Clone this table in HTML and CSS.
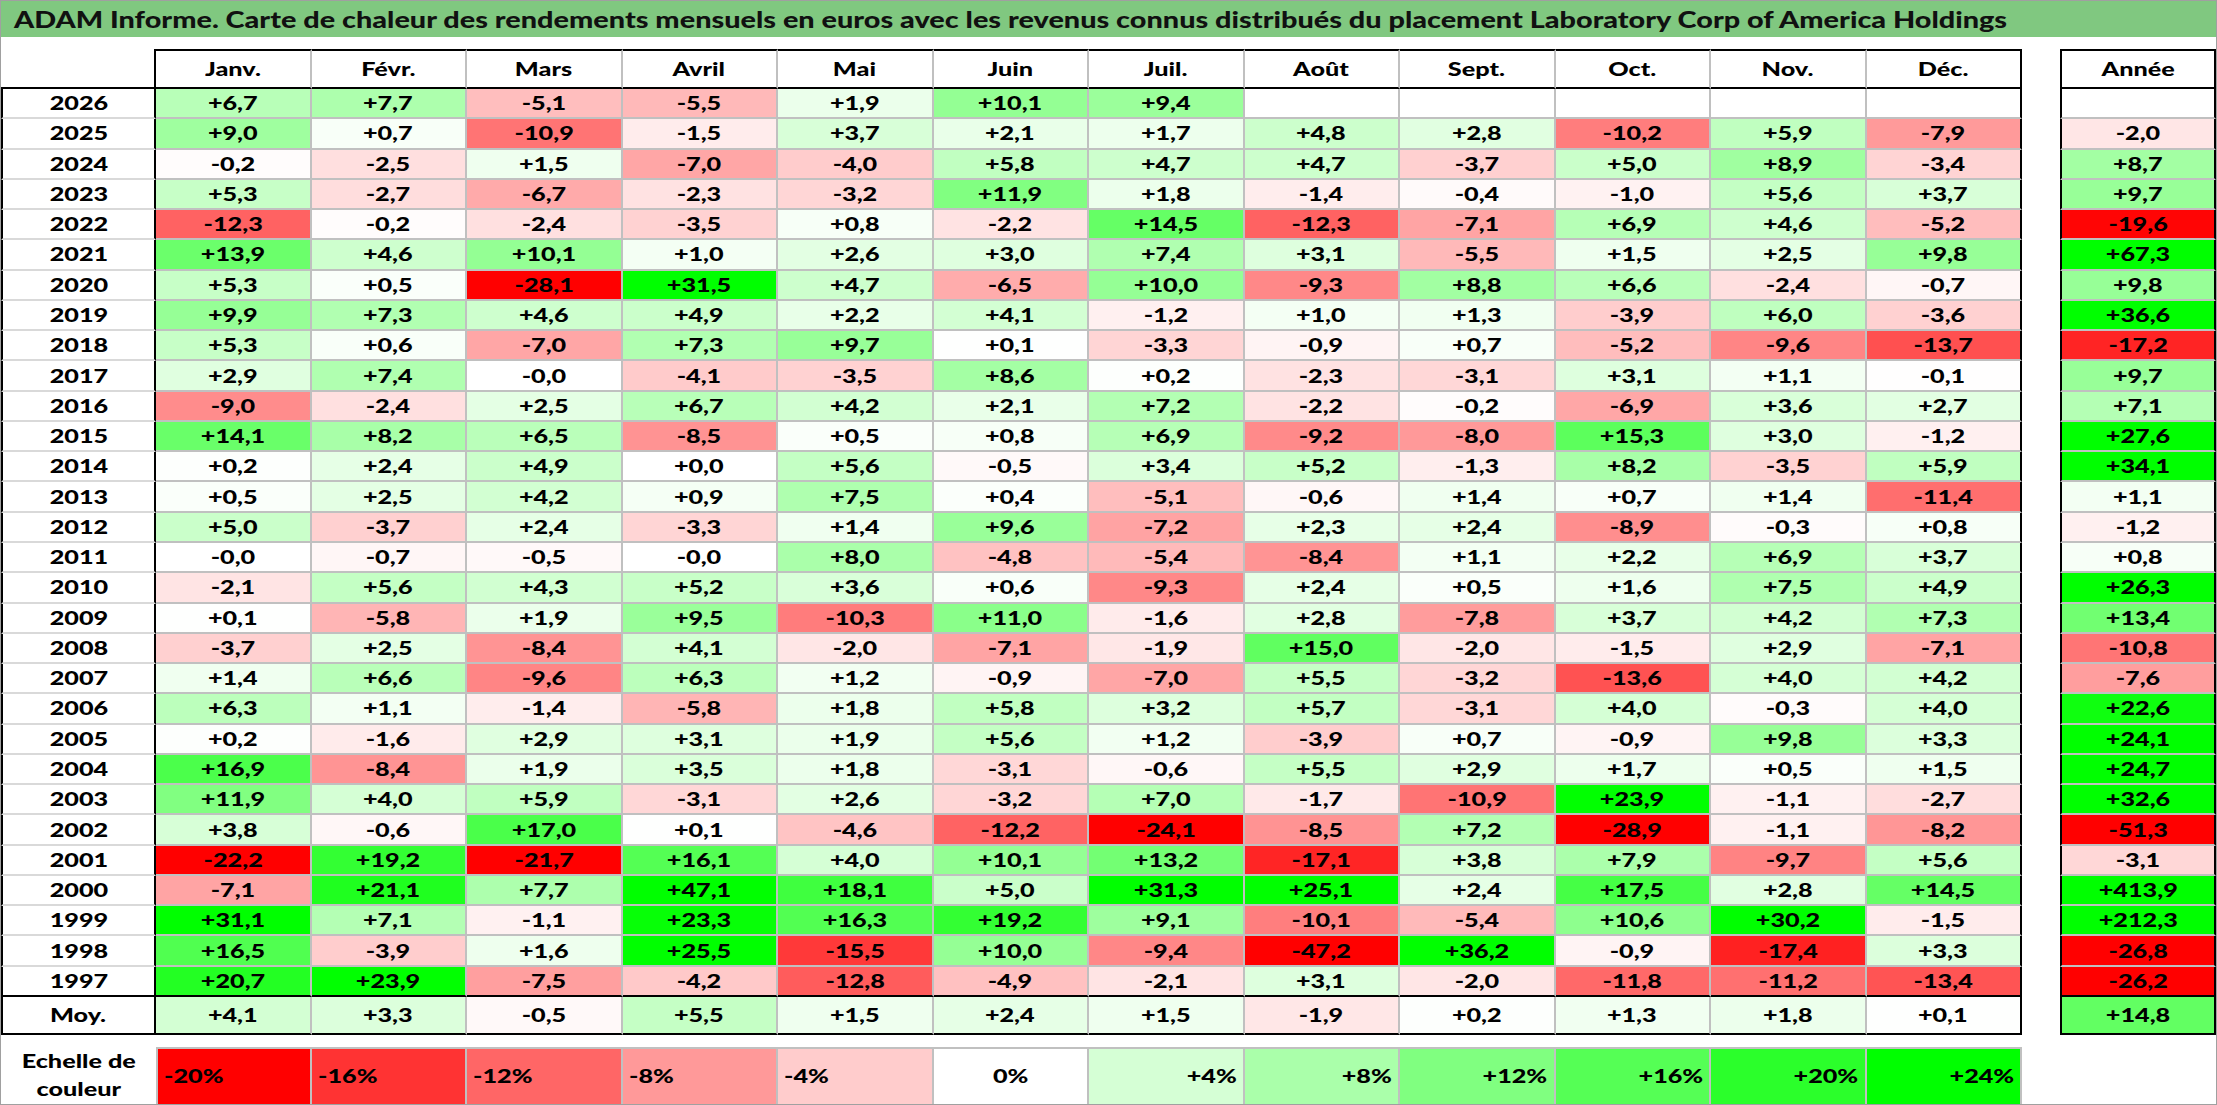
FILE: index.html
```html
<!DOCTYPE html>
<html lang="fr">
<head>
<meta charset="utf-8">
<title>ADAM Informe</title>
<link rel="stylesheet" href="styles.css">
</head>
<body>
<div class="sheet">
<div class="title"><span>ADAM Informe. Carte de chaleur des rendements mensuels en euros avec les revenus connus distribués du placement Laboratory Corp of America Holdings</span></div>
<div class="grid">
<div class="row head"><div></div><div><span>Janv.</span></div><div><span>Févr.</span></div><div><span>Mars</span></div><div><span>Avril</span></div><div><span>Mai</span></div><div><span>Juin</span></div><div><span>Juil.</span></div><div><span>Août</span></div><div><span>Sept.</span></div><div><span>Oct.</span></div><div><span>Nov.</span></div><div><span>Déc.</span></div><div><span>Année</span></div></div>
<div class="row"><div><span>2026</span></div><div class="c" style="--v:6.7"><span>+6,7</span></div><div class="c" style="--v:7.7"><span>+7,7</span></div><div class="c" style="--v:-5.1"><span>-5,1</span></div><div class="c" style="--v:-5.5"><span>-5,5</span></div><div class="c" style="--v:1.9"><span>+1,9</span></div><div class="c" style="--v:10.1"><span>+10,1</span></div><div class="c" style="--v:9.4"><span>+9,4</span></div><div class="e"></div><div class="e"></div><div class="e"></div><div class="e"></div><div class="e"></div><div class="e"></div></div>
<div class="row"><div><span>2025</span></div><div class="c" style="--v:9.0"><span>+9,0</span></div><div class="c" style="--v:0.7"><span>+0,7</span></div><div class="c" style="--v:-10.9"><span>-10,9</span></div><div class="c" style="--v:-1.5"><span>-1,5</span></div><div class="c" style="--v:3.7"><span>+3,7</span></div><div class="c" style="--v:2.1"><span>+2,1</span></div><div class="c" style="--v:1.7"><span>+1,7</span></div><div class="c" style="--v:4.8"><span>+4,8</span></div><div class="c" style="--v:2.8"><span>+2,8</span></div><div class="c" style="--v:-10.2"><span>-10,2</span></div><div class="c" style="--v:5.9"><span>+5,9</span></div><div class="c" style="--v:-7.9"><span>-7,9</span></div><div class="c" style="--v:-2.0"><span>-2,0</span></div></div>
<div class="row"><div><span>2024</span></div><div class="c" style="--v:-0.2"><span>-0,2</span></div><div class="c" style="--v:-2.5"><span>-2,5</span></div><div class="c" style="--v:1.5"><span>+1,5</span></div><div class="c" style="--v:-7.0"><span>-7,0</span></div><div class="c" style="--v:-4.0"><span>-4,0</span></div><div class="c" style="--v:5.8"><span>+5,8</span></div><div class="c" style="--v:4.7"><span>+4,7</span></div><div class="c" style="--v:4.7"><span>+4,7</span></div><div class="c" style="--v:-3.7"><span>-3,7</span></div><div class="c" style="--v:5.0"><span>+5,0</span></div><div class="c" style="--v:8.9"><span>+8,9</span></div><div class="c" style="--v:-3.4"><span>-3,4</span></div><div class="c" style="--v:8.7"><span>+8,7</span></div></div>
<div class="row"><div><span>2023</span></div><div class="c" style="--v:5.3"><span>+5,3</span></div><div class="c" style="--v:-2.7"><span>-2,7</span></div><div class="c" style="--v:-6.7"><span>-6,7</span></div><div class="c" style="--v:-2.3"><span>-2,3</span></div><div class="c" style="--v:-3.2"><span>-3,2</span></div><div class="c" style="--v:11.9"><span>+11,9</span></div><div class="c" style="--v:1.8"><span>+1,8</span></div><div class="c" style="--v:-1.4"><span>-1,4</span></div><div class="c" style="--v:-0.4"><span>-0,4</span></div><div class="c" style="--v:-1.0"><span>-1,0</span></div><div class="c" style="--v:5.6"><span>+5,6</span></div><div class="c" style="--v:3.7"><span>+3,7</span></div><div class="c" style="--v:9.7"><span>+9,7</span></div></div>
<div class="row"><div><span>2022</span></div><div class="c" style="--v:-12.3"><span>-12,3</span></div><div class="c" style="--v:-0.2"><span>-0,2</span></div><div class="c" style="--v:-2.4"><span>-2,4</span></div><div class="c" style="--v:-3.5"><span>-3,5</span></div><div class="c" style="--v:0.8"><span>+0,8</span></div><div class="c" style="--v:-2.2"><span>-2,2</span></div><div class="c" style="--v:14.5"><span>+14,5</span></div><div class="c" style="--v:-12.3"><span>-12,3</span></div><div class="c" style="--v:-7.1"><span>-7,1</span></div><div class="c" style="--v:6.9"><span>+6,9</span></div><div class="c" style="--v:4.6"><span>+4,6</span></div><div class="c" style="--v:-5.2"><span>-5,2</span></div><div class="c" style="--v:-19.6"><span>-19,6</span></div></div>
<div class="row"><div><span>2021</span></div><div class="c" style="--v:13.9"><span>+13,9</span></div><div class="c" style="--v:4.6"><span>+4,6</span></div><div class="c" style="--v:10.1"><span>+10,1</span></div><div class="c" style="--v:1.0"><span>+1,0</span></div><div class="c" style="--v:2.6"><span>+2,6</span></div><div class="c" style="--v:3.0"><span>+3,0</span></div><div class="c" style="--v:7.4"><span>+7,4</span></div><div class="c" style="--v:3.1"><span>+3,1</span></div><div class="c" style="--v:-5.5"><span>-5,5</span></div><div class="c" style="--v:1.5"><span>+1,5</span></div><div class="c" style="--v:2.5"><span>+2,5</span></div><div class="c" style="--v:9.8"><span>+9,8</span></div><div class="c" style="--v:67.3"><span>+67,3</span></div></div>
<div class="row"><div><span>2020</span></div><div class="c" style="--v:5.3"><span>+5,3</span></div><div class="c" style="--v:0.5"><span>+0,5</span></div><div class="c" style="--v:-28.1"><span>-28,1</span></div><div class="c" style="--v:31.5"><span>+31,5</span></div><div class="c" style="--v:4.7"><span>+4,7</span></div><div class="c" style="--v:-6.5"><span>-6,5</span></div><div class="c" style="--v:10.0"><span>+10,0</span></div><div class="c" style="--v:-9.3"><span>-9,3</span></div><div class="c" style="--v:8.8"><span>+8,8</span></div><div class="c" style="--v:6.6"><span>+6,6</span></div><div class="c" style="--v:-2.4"><span>-2,4</span></div><div class="c" style="--v:-0.7"><span>-0,7</span></div><div class="c" style="--v:9.8"><span>+9,8</span></div></div>
<div class="row"><div><span>2019</span></div><div class="c" style="--v:9.9"><span>+9,9</span></div><div class="c" style="--v:7.3"><span>+7,3</span></div><div class="c" style="--v:4.6"><span>+4,6</span></div><div class="c" style="--v:4.9"><span>+4,9</span></div><div class="c" style="--v:2.2"><span>+2,2</span></div><div class="c" style="--v:4.1"><span>+4,1</span></div><div class="c" style="--v:-1.2"><span>-1,2</span></div><div class="c" style="--v:1.0"><span>+1,0</span></div><div class="c" style="--v:1.3"><span>+1,3</span></div><div class="c" style="--v:-3.9"><span>-3,9</span></div><div class="c" style="--v:6.0"><span>+6,0</span></div><div class="c" style="--v:-3.6"><span>-3,6</span></div><div class="c" style="--v:36.6"><span>+36,6</span></div></div>
<div class="row"><div><span>2018</span></div><div class="c" style="--v:5.3"><span>+5,3</span></div><div class="c" style="--v:0.6"><span>+0,6</span></div><div class="c" style="--v:-7.0"><span>-7,0</span></div><div class="c" style="--v:7.3"><span>+7,3</span></div><div class="c" style="--v:9.7"><span>+9,7</span></div><div class="c" style="--v:0.1"><span>+0,1</span></div><div class="c" style="--v:-3.3"><span>-3,3</span></div><div class="c" style="--v:-0.9"><span>-0,9</span></div><div class="c" style="--v:0.7"><span>+0,7</span></div><div class="c" style="--v:-5.2"><span>-5,2</span></div><div class="c" style="--v:-9.6"><span>-9,6</span></div><div class="c" style="--v:-13.7"><span>-13,7</span></div><div class="c" style="--v:-17.2"><span>-17,2</span></div></div>
<div class="row"><div><span>2017</span></div><div class="c" style="--v:2.9"><span>+2,9</span></div><div class="c" style="--v:7.4"><span>+7,4</span></div><div class="c" style="--v:0"><span>-0,0</span></div><div class="c" style="--v:-4.1"><span>-4,1</span></div><div class="c" style="--v:-3.5"><span>-3,5</span></div><div class="c" style="--v:8.6"><span>+8,6</span></div><div class="c" style="--v:0.2"><span>+0,2</span></div><div class="c" style="--v:-2.3"><span>-2,3</span></div><div class="c" style="--v:-3.1"><span>-3,1</span></div><div class="c" style="--v:3.1"><span>+3,1</span></div><div class="c" style="--v:1.1"><span>+1,1</span></div><div class="c" style="--v:-0.1"><span>-0,1</span></div><div class="c" style="--v:9.7"><span>+9,7</span></div></div>
<div class="row"><div><span>2016</span></div><div class="c" style="--v:-9.0"><span>-9,0</span></div><div class="c" style="--v:-2.4"><span>-2,4</span></div><div class="c" style="--v:2.5"><span>+2,5</span></div><div class="c" style="--v:6.7"><span>+6,7</span></div><div class="c" style="--v:4.2"><span>+4,2</span></div><div class="c" style="--v:2.1"><span>+2,1</span></div><div class="c" style="--v:7.2"><span>+7,2</span></div><div class="c" style="--v:-2.2"><span>-2,2</span></div><div class="c" style="--v:-0.2"><span>-0,2</span></div><div class="c" style="--v:-6.9"><span>-6,9</span></div><div class="c" style="--v:3.6"><span>+3,6</span></div><div class="c" style="--v:2.7"><span>+2,7</span></div><div class="c" style="--v:7.1"><span>+7,1</span></div></div>
<div class="row"><div><span>2015</span></div><div class="c" style="--v:14.1"><span>+14,1</span></div><div class="c" style="--v:8.2"><span>+8,2</span></div><div class="c" style="--v:6.5"><span>+6,5</span></div><div class="c" style="--v:-8.5"><span>-8,5</span></div><div class="c" style="--v:0.5"><span>+0,5</span></div><div class="c" style="--v:0.8"><span>+0,8</span></div><div class="c" style="--v:6.9"><span>+6,9</span></div><div class="c" style="--v:-9.2"><span>-9,2</span></div><div class="c" style="--v:-8.0"><span>-8,0</span></div><div class="c" style="--v:15.3"><span>+15,3</span></div><div class="c" style="--v:3.0"><span>+3,0</span></div><div class="c" style="--v:-1.2"><span>-1,2</span></div><div class="c" style="--v:27.6"><span>+27,6</span></div></div>
<div class="row"><div><span>2014</span></div><div class="c" style="--v:0.2"><span>+0,2</span></div><div class="c" style="--v:2.4"><span>+2,4</span></div><div class="c" style="--v:4.9"><span>+4,9</span></div><div class="c" style="--v:0"><span>+0,0</span></div><div class="c" style="--v:5.6"><span>+5,6</span></div><div class="c" style="--v:-0.5"><span>-0,5</span></div><div class="c" style="--v:3.4"><span>+3,4</span></div><div class="c" style="--v:5.2"><span>+5,2</span></div><div class="c" style="--v:-1.3"><span>-1,3</span></div><div class="c" style="--v:8.2"><span>+8,2</span></div><div class="c" style="--v:-3.5"><span>-3,5</span></div><div class="c" style="--v:5.9"><span>+5,9</span></div><div class="c" style="--v:34.1"><span>+34,1</span></div></div>
<div class="row"><div><span>2013</span></div><div class="c" style="--v:0.5"><span>+0,5</span></div><div class="c" style="--v:2.5"><span>+2,5</span></div><div class="c" style="--v:4.2"><span>+4,2</span></div><div class="c" style="--v:0.9"><span>+0,9</span></div><div class="c" style="--v:7.5"><span>+7,5</span></div><div class="c" style="--v:0.4"><span>+0,4</span></div><div class="c" style="--v:-5.1"><span>-5,1</span></div><div class="c" style="--v:-0.6"><span>-0,6</span></div><div class="c" style="--v:1.4"><span>+1,4</span></div><div class="c" style="--v:0.7"><span>+0,7</span></div><div class="c" style="--v:1.4"><span>+1,4</span></div><div class="c" style="--v:-11.4"><span>-11,4</span></div><div class="c" style="--v:1.1"><span>+1,1</span></div></div>
<div class="row"><div><span>2012</span></div><div class="c" style="--v:5.0"><span>+5,0</span></div><div class="c" style="--v:-3.7"><span>-3,7</span></div><div class="c" style="--v:2.4"><span>+2,4</span></div><div class="c" style="--v:-3.3"><span>-3,3</span></div><div class="c" style="--v:1.4"><span>+1,4</span></div><div class="c" style="--v:9.6"><span>+9,6</span></div><div class="c" style="--v:-7.2"><span>-7,2</span></div><div class="c" style="--v:2.3"><span>+2,3</span></div><div class="c" style="--v:2.4"><span>+2,4</span></div><div class="c" style="--v:-8.9"><span>-8,9</span></div><div class="c" style="--v:-0.3"><span>-0,3</span></div><div class="c" style="--v:0.8"><span>+0,8</span></div><div class="c" style="--v:-1.2"><span>-1,2</span></div></div>
<div class="row"><div><span>2011</span></div><div class="c" style="--v:0"><span>-0,0</span></div><div class="c" style="--v:-0.7"><span>-0,7</span></div><div class="c" style="--v:-0.5"><span>-0,5</span></div><div class="c" style="--v:0"><span>-0,0</span></div><div class="c" style="--v:8.0"><span>+8,0</span></div><div class="c" style="--v:-4.8"><span>-4,8</span></div><div class="c" style="--v:-5.4"><span>-5,4</span></div><div class="c" style="--v:-8.4"><span>-8,4</span></div><div class="c" style="--v:1.1"><span>+1,1</span></div><div class="c" style="--v:2.2"><span>+2,2</span></div><div class="c" style="--v:6.9"><span>+6,9</span></div><div class="c" style="--v:3.7"><span>+3,7</span></div><div class="c" style="--v:0.8"><span>+0,8</span></div></div>
<div class="row"><div><span>2010</span></div><div class="c" style="--v:-2.1"><span>-2,1</span></div><div class="c" style="--v:5.6"><span>+5,6</span></div><div class="c" style="--v:4.3"><span>+4,3</span></div><div class="c" style="--v:5.2"><span>+5,2</span></div><div class="c" style="--v:3.6"><span>+3,6</span></div><div class="c" style="--v:0.6"><span>+0,6</span></div><div class="c" style="--v:-9.3"><span>-9,3</span></div><div class="c" style="--v:2.4"><span>+2,4</span></div><div class="c" style="--v:0.5"><span>+0,5</span></div><div class="c" style="--v:1.6"><span>+1,6</span></div><div class="c" style="--v:7.5"><span>+7,5</span></div><div class="c" style="--v:4.9"><span>+4,9</span></div><div class="c" style="--v:26.3"><span>+26,3</span></div></div>
<div class="row"><div><span>2009</span></div><div class="c" style="--v:0.1"><span>+0,1</span></div><div class="c" style="--v:-5.8"><span>-5,8</span></div><div class="c" style="--v:1.9"><span>+1,9</span></div><div class="c" style="--v:9.5"><span>+9,5</span></div><div class="c" style="--v:-10.3"><span>-10,3</span></div><div class="c" style="--v:11.0"><span>+11,0</span></div><div class="c" style="--v:-1.6"><span>-1,6</span></div><div class="c" style="--v:2.8"><span>+2,8</span></div><div class="c" style="--v:-7.8"><span>-7,8</span></div><div class="c" style="--v:3.7"><span>+3,7</span></div><div class="c" style="--v:4.2"><span>+4,2</span></div><div class="c" style="--v:7.3"><span>+7,3</span></div><div class="c" style="--v:13.4"><span>+13,4</span></div></div>
<div class="row"><div><span>2008</span></div><div class="c" style="--v:-3.7"><span>-3,7</span></div><div class="c" style="--v:2.5"><span>+2,5</span></div><div class="c" style="--v:-8.4"><span>-8,4</span></div><div class="c" style="--v:4.1"><span>+4,1</span></div><div class="c" style="--v:-2.0"><span>-2,0</span></div><div class="c" style="--v:-7.1"><span>-7,1</span></div><div class="c" style="--v:-1.9"><span>-1,9</span></div><div class="c" style="--v:15.0"><span>+15,0</span></div><div class="c" style="--v:-2.0"><span>-2,0</span></div><div class="c" style="--v:-1.5"><span>-1,5</span></div><div class="c" style="--v:2.9"><span>+2,9</span></div><div class="c" style="--v:-7.1"><span>-7,1</span></div><div class="c" style="--v:-10.8"><span>-10,8</span></div></div>
<div class="row"><div><span>2007</span></div><div class="c" style="--v:1.4"><span>+1,4</span></div><div class="c" style="--v:6.6"><span>+6,6</span></div><div class="c" style="--v:-9.6"><span>-9,6</span></div><div class="c" style="--v:6.3"><span>+6,3</span></div><div class="c" style="--v:1.2"><span>+1,2</span></div><div class="c" style="--v:-0.9"><span>-0,9</span></div><div class="c" style="--v:-7.0"><span>-7,0</span></div><div class="c" style="--v:5.5"><span>+5,5</span></div><div class="c" style="--v:-3.2"><span>-3,2</span></div><div class="c" style="--v:-13.6"><span>-13,6</span></div><div class="c" style="--v:4.0"><span>+4,0</span></div><div class="c" style="--v:4.2"><span>+4,2</span></div><div class="c" style="--v:-7.6"><span>-7,6</span></div></div>
<div class="row"><div><span>2006</span></div><div class="c" style="--v:6.3"><span>+6,3</span></div><div class="c" style="--v:1.1"><span>+1,1</span></div><div class="c" style="--v:-1.4"><span>-1,4</span></div><div class="c" style="--v:-5.8"><span>-5,8</span></div><div class="c" style="--v:1.8"><span>+1,8</span></div><div class="c" style="--v:5.8"><span>+5,8</span></div><div class="c" style="--v:3.2"><span>+3,2</span></div><div class="c" style="--v:5.7"><span>+5,7</span></div><div class="c" style="--v:-3.1"><span>-3,1</span></div><div class="c" style="--v:4.0"><span>+4,0</span></div><div class="c" style="--v:-0.3"><span>-0,3</span></div><div class="c" style="--v:4.0"><span>+4,0</span></div><div class="c" style="--v:22.6"><span>+22,6</span></div></div>
<div class="row"><div><span>2005</span></div><div class="c" style="--v:0.2"><span>+0,2</span></div><div class="c" style="--v:-1.6"><span>-1,6</span></div><div class="c" style="--v:2.9"><span>+2,9</span></div><div class="c" style="--v:3.1"><span>+3,1</span></div><div class="c" style="--v:1.9"><span>+1,9</span></div><div class="c" style="--v:5.6"><span>+5,6</span></div><div class="c" style="--v:1.2"><span>+1,2</span></div><div class="c" style="--v:-3.9"><span>-3,9</span></div><div class="c" style="--v:0.7"><span>+0,7</span></div><div class="c" style="--v:-0.9"><span>-0,9</span></div><div class="c" style="--v:9.8"><span>+9,8</span></div><div class="c" style="--v:3.3"><span>+3,3</span></div><div class="c" style="--v:24.1"><span>+24,1</span></div></div>
<div class="row"><div><span>2004</span></div><div class="c" style="--v:16.9"><span>+16,9</span></div><div class="c" style="--v:-8.4"><span>-8,4</span></div><div class="c" style="--v:1.9"><span>+1,9</span></div><div class="c" style="--v:3.5"><span>+3,5</span></div><div class="c" style="--v:1.8"><span>+1,8</span></div><div class="c" style="--v:-3.1"><span>-3,1</span></div><div class="c" style="--v:-0.6"><span>-0,6</span></div><div class="c" style="--v:5.5"><span>+5,5</span></div><div class="c" style="--v:2.9"><span>+2,9</span></div><div class="c" style="--v:1.7"><span>+1,7</span></div><div class="c" style="--v:0.5"><span>+0,5</span></div><div class="c" style="--v:1.5"><span>+1,5</span></div><div class="c" style="--v:24.7"><span>+24,7</span></div></div>
<div class="row"><div><span>2003</span></div><div class="c" style="--v:11.9"><span>+11,9</span></div><div class="c" style="--v:4.0"><span>+4,0</span></div><div class="c" style="--v:5.9"><span>+5,9</span></div><div class="c" style="--v:-3.1"><span>-3,1</span></div><div class="c" style="--v:2.6"><span>+2,6</span></div><div class="c" style="--v:-3.2"><span>-3,2</span></div><div class="c" style="--v:7.0"><span>+7,0</span></div><div class="c" style="--v:-1.7"><span>-1,7</span></div><div class="c" style="--v:-10.9"><span>-10,9</span></div><div class="c" style="--v:23.9"><span>+23,9</span></div><div class="c" style="--v:-1.1"><span>-1,1</span></div><div class="c" style="--v:-2.7"><span>-2,7</span></div><div class="c" style="--v:32.6"><span>+32,6</span></div></div>
<div class="row"><div><span>2002</span></div><div class="c" style="--v:3.8"><span>+3,8</span></div><div class="c" style="--v:-0.6"><span>-0,6</span></div><div class="c" style="--v:17.0"><span>+17,0</span></div><div class="c" style="--v:0.1"><span>+0,1</span></div><div class="c" style="--v:-4.6"><span>-4,6</span></div><div class="c" style="--v:-12.2"><span>-12,2</span></div><div class="c" style="--v:-24.1"><span>-24,1</span></div><div class="c" style="--v:-8.5"><span>-8,5</span></div><div class="c" style="--v:7.2"><span>+7,2</span></div><div class="c" style="--v:-28.9"><span>-28,9</span></div><div class="c" style="--v:-1.1"><span>-1,1</span></div><div class="c" style="--v:-8.2"><span>-8,2</span></div><div class="c" style="--v:-51.3"><span>-51,3</span></div></div>
<div class="row"><div><span>2001</span></div><div class="c" style="--v:-22.2"><span>-22,2</span></div><div class="c" style="--v:19.2"><span>+19,2</span></div><div class="c" style="--v:-21.7"><span>-21,7</span></div><div class="c" style="--v:16.1"><span>+16,1</span></div><div class="c" style="--v:4.0"><span>+4,0</span></div><div class="c" style="--v:10.1"><span>+10,1</span></div><div class="c" style="--v:13.2"><span>+13,2</span></div><div class="c" style="--v:-17.1"><span>-17,1</span></div><div class="c" style="--v:3.8"><span>+3,8</span></div><div class="c" style="--v:7.9"><span>+7,9</span></div><div class="c" style="--v:-9.7"><span>-9,7</span></div><div class="c" style="--v:5.6"><span>+5,6</span></div><div class="c" style="--v:-3.1"><span>-3,1</span></div></div>
<div class="row"><div><span>2000</span></div><div class="c" style="--v:-7.1"><span>-7,1</span></div><div class="c" style="--v:21.1"><span>+21,1</span></div><div class="c" style="--v:7.7"><span>+7,7</span></div><div class="c" style="--v:47.1"><span>+47,1</span></div><div class="c" style="--v:18.1"><span>+18,1</span></div><div class="c" style="--v:5.0"><span>+5,0</span></div><div class="c" style="--v:31.3"><span>+31,3</span></div><div class="c" style="--v:25.1"><span>+25,1</span></div><div class="c" style="--v:2.4"><span>+2,4</span></div><div class="c" style="--v:17.5"><span>+17,5</span></div><div class="c" style="--v:2.8"><span>+2,8</span></div><div class="c" style="--v:14.5"><span>+14,5</span></div><div class="c" style="--v:413.9"><span>+413,9</span></div></div>
<div class="row"><div><span>1999</span></div><div class="c" style="--v:31.1"><span>+31,1</span></div><div class="c" style="--v:7.1"><span>+7,1</span></div><div class="c" style="--v:-1.1"><span>-1,1</span></div><div class="c" style="--v:23.3"><span>+23,3</span></div><div class="c" style="--v:16.3"><span>+16,3</span></div><div class="c" style="--v:19.2"><span>+19,2</span></div><div class="c" style="--v:9.1"><span>+9,1</span></div><div class="c" style="--v:-10.1"><span>-10,1</span></div><div class="c" style="--v:-5.4"><span>-5,4</span></div><div class="c" style="--v:10.6"><span>+10,6</span></div><div class="c" style="--v:30.2"><span>+30,2</span></div><div class="c" style="--v:-1.5"><span>-1,5</span></div><div class="c" style="--v:212.3"><span>+212,3</span></div></div>
<div class="row"><div><span>1998</span></div><div class="c" style="--v:16.5"><span>+16,5</span></div><div class="c" style="--v:-3.9"><span>-3,9</span></div><div class="c" style="--v:1.6"><span>+1,6</span></div><div class="c" style="--v:25.5"><span>+25,5</span></div><div class="c" style="--v:-15.5"><span>-15,5</span></div><div class="c" style="--v:10.0"><span>+10,0</span></div><div class="c" style="--v:-9.4"><span>-9,4</span></div><div class="c" style="--v:-47.2"><span>-47,2</span></div><div class="c" style="--v:36.2"><span>+36,2</span></div><div class="c" style="--v:-0.9"><span>-0,9</span></div><div class="c" style="--v:-17.4"><span>-17,4</span></div><div class="c" style="--v:3.3"><span>+3,3</span></div><div class="c" style="--v:-26.8"><span>-26,8</span></div></div>
<div class="row end"><div><span>1997</span></div><div class="c" style="--v:20.7"><span>+20,7</span></div><div class="c" style="--v:23.9"><span>+23,9</span></div><div class="c" style="--v:-7.5"><span>-7,5</span></div><div class="c" style="--v:-4.2"><span>-4,2</span></div><div class="c" style="--v:-12.8"><span>-12,8</span></div><div class="c" style="--v:-4.9"><span>-4,9</span></div><div class="c" style="--v:-2.1"><span>-2,1</span></div><div class="c" style="--v:3.1"><span>+3,1</span></div><div class="c" style="--v:-2.0"><span>-2,0</span></div><div class="c" style="--v:-11.8"><span>-11,8</span></div><div class="c" style="--v:-11.2"><span>-11,2</span></div><div class="c" style="--v:-13.4"><span>-13,4</span></div><div class="c" style="--v:-26.2"><span>-26,2</span></div></div>
<div class="row end"><div><span>Moy.</span></div><div class="c" style="--v:4.1"><span>+4,1</span></div><div class="c" style="--v:3.3"><span>+3,3</span></div><div class="c" style="--v:-0.5"><span>-0,5</span></div><div class="c" style="--v:5.5"><span>+5,5</span></div><div class="c" style="--v:1.5"><span>+1,5</span></div><div class="c" style="--v:2.4"><span>+2,4</span></div><div class="c" style="--v:1.5"><span>+1,5</span></div><div class="c" style="--v:-1.9"><span>-1,9</span></div><div class="c" style="--v:0.2"><span>+0,2</span></div><div class="c" style="--v:1.3"><span>+1,3</span></div><div class="c" style="--v:1.8"><span>+1,8</span></div><div class="c" style="--v:0.1"><span>+0,1</span></div><div class="c" style="--v:14.8"><span>+14,8</span></div></div>
</div>
<div class="legend">
<div class="lab"><span>Echelle de<br>couleur</span></div>
<div class="c neg" style="--v:-20"><span>-20%</span></div>
<div class="c neg" style="--v:-16"><span>-16%</span></div>
<div class="c neg" style="--v:-12"><span>-12%</span></div>
<div class="c neg" style="--v:-8"><span>-8%</span></div>
<div class="c neg" style="--v:-4"><span>-4%</span></div>
<div class="c mid" style="--v:0"><span>0%</span></div>
<div class="c pos" style="--v:4"><span>+4%</span></div>
<div class="c pos" style="--v:8"><span>+8%</span></div>
<div class="c pos" style="--v:12"><span>+12%</span></div>
<div class="c pos" style="--v:16"><span>+16%</span></div>
<div class="c pos" style="--v:20"><span>+20%</span></div>
<div class="c pos" style="--v:24"><span>+24%</span></div>
</div>
</div>
</body>
</html>
```

FILE: styles.css
```css
:root {
  --sx: 1.4;
  --tsx: 1.31;
  --grey: #c0c0c0;
  --ink: #000;
}
* { box-sizing: border-box; margin: 0; padding: 0; }
html, body { width: 2217px; height: 1105px; overflow: hidden; background: #fff; }
body {
  font-family: Lato, "Open Sans", "DejaVu Sans", sans-serif;
  font-weight: 900;
  color: var(--ink);
}
.sheet {
  width: 2217px;
  height: 1105px;
  border: 1px solid #a0a0a0;
  display: flex;
  flex-direction: column;
  overflow: hidden;
}
.title {
  height: 36px;
  flex: none;
  background: #80c880;
  display: flex;
  align-items: center;
  padding-left: 13px;
  font-size: 22px;
  color: #111;
}
.title span {
  display: inline-block;
  white-space: nowrap;
  transform: scaleX(var(--tsx));
  transform-origin: left center;
}
.grid {
  margin-top: 12px;
  flex: none;
  display: grid;
  grid-template-columns: 155px repeat(12, 1fr) 38px 156px;
  grid-template-rows: 40px repeat(30, 30.27px) 38px;
  font-size: 18px;
}
.row { display: contents; }
.row > * {
  display: flex;
  align-items: center;
  justify-content: center;
  border-bottom: 2px solid var(--grey);
  border-right: 2px solid var(--grey);
  white-space: nowrap;
}
.row > * > span,
.legend span {
  display: inline-block;
  transform: scaleX(var(--sx));
}
.row > :first-child {
  border-left: 2px solid #000;
  border-right: 2px solid #000;
  border-bottom-color: #d9d9d9;
}
.row > :nth-child(13) { border-right-color: #000; }
.row > :nth-child(14) {
  grid-column: 15;
  border-left: 2px solid #000;
  border-right-color: #000;
}
.row.end > * { border-bottom-color: #000; }
.row.head > * {
  border-top: 2px solid #000;
  border-bottom-color: #000;
}
.row.head > :first-child {
  border-top: none;
  border-left: none;
  border-right: 2px solid #000;
  border-bottom: 2px solid #000;
}
.e { background: #fff; }
.c {
  --p: clamp(0, var(--v) / 24, 1);
  --n: clamp(0, var(--v) / -20, 1);
  background: rgb(calc(255 - 255 * var(--p)) calc(255 - 255 * var(--n)) calc(255 - 255 * (var(--p) + var(--n))));
}
.legend {
  margin-top: 12px;
  flex: 1;
  display: grid;
  grid-template-columns: 155px repeat(12, 1fr) 38px 156px;
  font-size: 18px;
}
.legend > * {
  display: flex;
  align-items: center;
}
.legend > .c {
  border-top: 2px solid var(--grey);
  border-right: 2px solid var(--grey);
  padding: 0 6px;
}
.legend > .c:nth-child(2) { border-left: 2px solid var(--grey); }
.lab {
  justify-content: center;
  text-align: center;
  line-height: 28px;
}
.neg { justify-content: flex-start; }
.neg span { transform-origin: left center; }
.mid { justify-content: center; }
.pos { justify-content: flex-end; }
.pos span { transform-origin: right center; }
```
